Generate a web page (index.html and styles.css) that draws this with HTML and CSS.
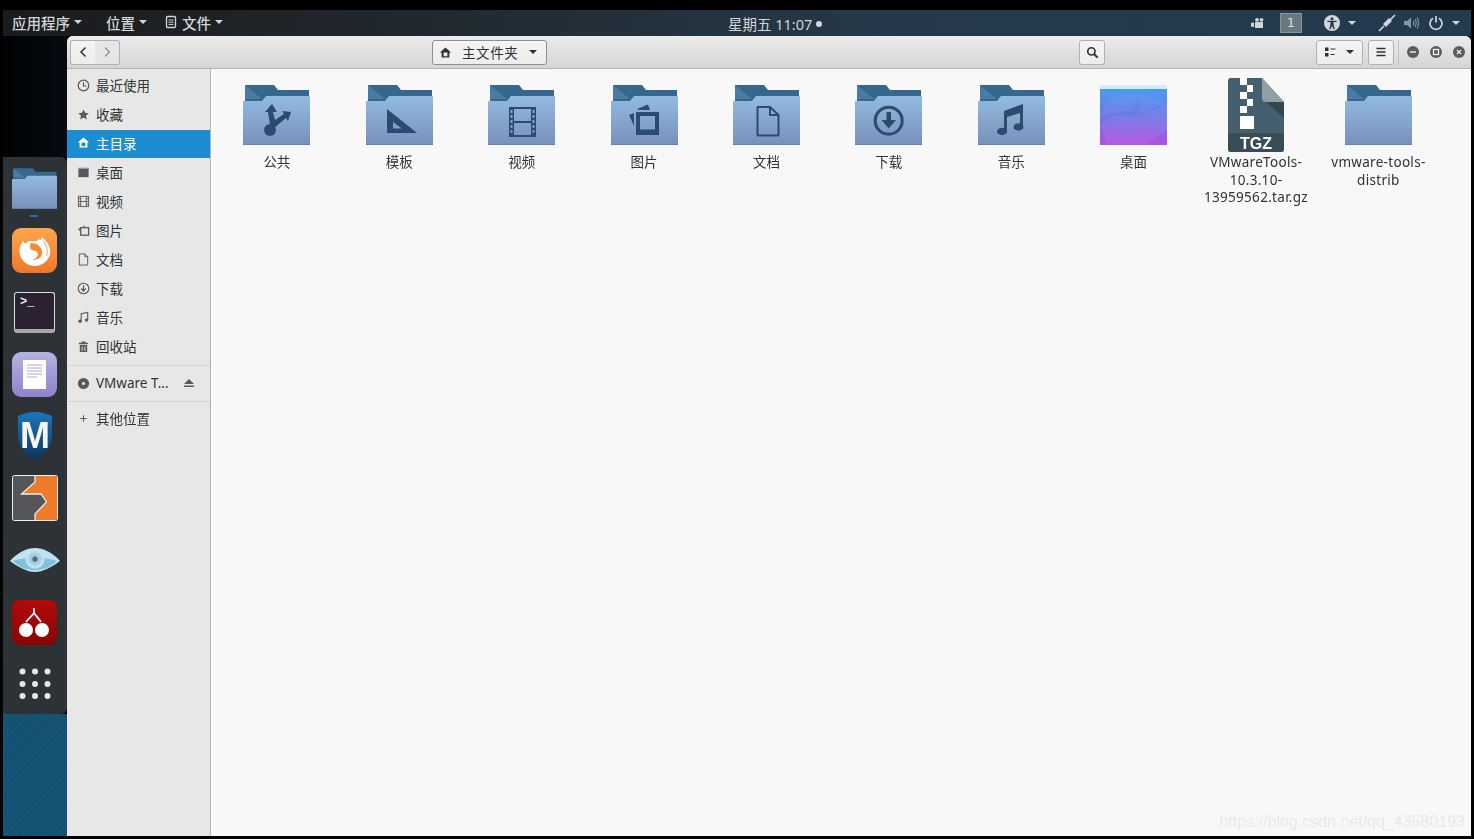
FILE: index.html
```html
<!DOCTYPE html>
<html>
<head>
    <title>主文件夹</title>
    <meta charset="utf-8">
    <link rel="stylesheet" href="styles.css">
</head>
<body>
<svg class="defs" width="0" height="0">
    <defs>
        <linearGradient id="folderFront" x1="0" y1="0" x2="0" y2="1">
            <stop offset="0" stop-color="#93bbe0"/>
            <stop offset="1" stop-color="#7890bb"/>
        </linearGradient>
        <linearGradient id="wall" x1="0" y1="0" x2="0" y2="1">
            <stop offset="0" stop-color="#45a0f2"/>
            <stop offset="0.5" stop-color="#6d79e6"/>
            <stop offset="1" stop-color="#b24fe2"/>
        </linearGradient>
        <linearGradient id="fox" x1="0" y1="0" x2="0" y2="1">
            <stop offset="0" stop-color="#ffa64f"/>
            <stop offset="1" stop-color="#f0772a"/>
        </linearGradient>
        <linearGradient id="editor" x1="0" y1="0" x2="0" y2="1">
            <stop offset="0" stop-color="#b6b2e2"/>
            <stop offset="1" stop-color="#8d83cb"/>
        </linearGradient>
        <linearGradient id="shield" x1="0" y1="0" x2="0" y2="1">
            <stop offset="0" stop-color="#1c76b8"/>
            <stop offset="1" stop-color="#10335c"/>
        </linearGradient>
        <linearGradient id="cherry" x1="0" y1="0" x2="0" y2="1">
            <stop offset="0" stop-color="#b50a0a"/>
            <stop offset="1" stop-color="#880404"/>
        </linearGradient>
        <radialGradient id="iris">
            <stop offset="0" stop-color="#5d8ba5"/>
            <stop offset="0.35" stop-color="#9cc6dc"/>
            <stop offset="1" stop-color="#cfe8f2"/>
        </radialGradient>

        <symbol id="folder" viewBox="0 0 67 60">
            <path d="M2 0H31L35 5H66V18H2Z" fill="#36678c"/>
            <path d="M2 0L19 14H2Z" fill="#4a7ba3"/>
            <path d="M0 16H19L23 11H67V60H0Z" fill="url(#folderFront)"/>
            <path d="M0 59H67V60H0Z" fill="#6683ad"/>
        </symbol>
    </defs>
</svg>

<div class="screen">
    <div class="panel">
        <div class="panel-left">
            <span class="panel-menu">应用程序<i class="caret"></i></span>
            <span class="panel-menu places">位置<i class="caret"></i></span>
            <span class="panel-menu files">
                <svg class="ico" viewBox="0 0 12 14" width="12" height="14"><rect x="1.5" y="1.5" width="9" height="11" rx="1" fill="none" stroke="currentColor" stroke-width="1.3"/><path d="M3.5 5H8.5M3.5 7.2H8.5M3.5 9.4H8.5" stroke="currentColor"/></svg>
                文件<i class="caret"></i>
            </span>
        </div>
        <div class="panel-clock">星期五 11:07<i class="dot"></i></div>
        <div class="panel-right">
            <svg class="cam" viewBox="0 0 14 12" width="14" height="12"><path d="M4 5H12V11H4ZM0 6L3 5.500V10L0 9.500Z" fill="currentColor"/><circle cx="6" cy="2.800" r="1.900" fill="currentColor"/><circle cx="10.500" cy="2.800" r="1.900" fill="currentColor"/></svg>
            <span class="workspace">1</span>
            <svg class="access" viewBox="0 0 16 16" width="16" height="16"><circle cx="8" cy="8" r="8" fill="currentColor"/><circle cx="8" cy="3.8" r="1.5" fill="#243a4a"/><path d="M3.5 5.8H12.5V7H9.6V10L10.8 14H9.4L8 10.8 6.6 14H5.2L6.4 10V7H3.5Z" fill="#243a4a"/></svg>
            <i class="caret"></i>
            <svg class="plug" viewBox="0 0 18 18" width="18" height="18"><path d="M1 17L6 12M12 6L17 1" stroke="currentColor" stroke-width="1.6"/><path d="M5 10L8 7 11 4 14 7 8 13Z" fill="currentColor"/></svg>
            <svg class="vol" viewBox="0 0 16 14" width="16" height="14"><path d="M1 5H4L8 1.5V12.5L4 9H1Z" fill="#8a959c"/><path d="M10 4.5Q11.5 7 10 9.5M12 3Q14.3 7 12 11M14 1.5Q17 7 14 12.5" fill="none" stroke="#8a959c" stroke-width="1.1"/></svg>
            <svg class="power" viewBox="0 0 16 16" width="16" height="16"><path d="M5 3.2A6 6 0 1 0 11 3.2" fill="none" stroke="currentColor" stroke-width="1.7"/><path d="M8 1V7.5" stroke="currentColor" stroke-width="1.7"/></svg>
            <i class="caret"></i>
        </div>
    </div>

    <div class="desktop">
        <div class="dock-col">
            <div class="dock-top"></div>
            <div class="dock">
                <div class="dock-item running">
                    <svg width="45" height="41"><use href="#folder"/></svg>
                    <i class="run-mark"></i>
                </div>
                <div class="dock-item">
                    <svg width="45" height="45" viewBox="0 0 45 45">
                        <rect width="45" height="45" rx="9" fill="url(#fox)"/>
                        <path d="M30 9C36 14 39 20 38 26 36.500 33 30 38 23 38 14 38 7.500 31 7.500 23 7.500 19 9 15.500 11.500 13L13 16C15 13.500 17.500 12.500 20 13 23 13.500 26 13 27 11 28 12.500 29.500 12 30 9Z" fill="#fff"/>
                        <path d="M19 15C26 15 31 20 30 26 29 30 25 32.500 20.500 31.500 24.500 30.500 27 27.500 25.500 24.500 24 22 20 23 18.500 21 17.500 19.500 18 17 19 15Z" fill="#f58a35"/>
                        <path d="M31.500 13C35 18 36 23 34.500 28" fill="none" stroke="#f58a35" stroke-width="0.800"/>
                    </svg>
                </div>
                <div class="dock-item">
                    <div class="term"><span class="term-prompt">&gt;_</span></div>
                </div>
                <div class="dock-item">
                    <svg width="45" height="45" viewBox="0 0 45 45">
                        <rect width="45" height="45" rx="9" fill="url(#editor)"/>
                        <rect x="11" y="8" width="23" height="29" fill="#fff"/>
                        <path d="M15 13H30M15 16H30M15 19H30M15 22H30M15 25H25" stroke="#a9a4d8" stroke-width="1"/>
                    </svg>
                </div>
                <div class="dock-item">
                    <svg width="36" height="48" viewBox="0 0 36 48">
                        <path d="M18 0C24 0 30 2 35 4V26C35 35 26 43 18 48 10 43 1 35 1 26V4C6 2 12 0 18 0Z" fill="url(#shield)"/>
                        <text class="shield-m" x="18" y="36" text-anchor="middle">M</text>
                    </svg>
                </div>
                <div class="dock-item">
                    <svg width="46" height="46" viewBox="0 0 46 46">
                        <rect x="0.500" y="0.500" width="45" height="45" rx="2" fill="#555658" stroke="#eee"/>
                        <path d="M23 1H45V45H23V39L34.500 27 29 19H9.500L23 7Z" fill="#ef7a2a"/>
                        <path d="M23 1V7L9.500 19H29L34.500 27 23 39V45" fill="none" stroke="#eee" stroke-width="1.300"/>
                    </svg>
                </div>
                <div class="dock-item">
                    <svg width="50" height="24" viewBox="0 0 50 24">
                        <path d="M0 13C8 4 17 0 25 0 33 0 42 4 50 13 42 19 33 24 25 24 17 24 8 19 0 13Z" fill="#bfe3f1"/>
                        <path d="M3 13C12 9 38 9 47 13 40 20 32 22 25 22 18 22 10 20 3 13Z" fill="#7fc0dc"/>
                        <circle cx="25" cy="11" r="9.500" fill="url(#iris)"/>
                        <circle cx="25" cy="11" r="2.500" fill="#4d6f84"/>
                    </svg>
                </div>
                <div class="dock-item">
                    <svg width="45" height="45" viewBox="0 0 45 45">
                        <rect width="45" height="45" rx="8" fill="url(#cherry)"/>
                        <path d="M22 8V13M22 13C20 16 17 18 14 22M22 13C25 17 27 19 29 22" fill="none" stroke="#fff" stroke-width="1.700"/>
                        <circle cx="14" cy="30" r="7" fill="#fff"/>
                        <circle cx="30" cy="30" r="7" fill="#fff"/>
                    </svg>
                </div>
                <div class="dock-item">
                    <svg width="32" height="32" viewBox="0 0 32 32" fill="#e6e6e6">
                        <circle cx="3.500" cy="3.500" r="3"/><circle cx="16" cy="3.500" r="3"/><circle cx="28.500" cy="3.500" r="3"/>
                        <circle cx="3.500" cy="16" r="3"/><circle cx="16" cy="16" r="3"/><circle cx="28.500" cy="16" r="3"/>
                        <circle cx="3.500" cy="28" r="3"/><circle cx="16" cy="28" r="3"/><circle cx="28.500" cy="28" r="3"/>
                    </svg>
                </div>
            </div>
            <div class="dock-bottom"></div>
        </div>

        <div class="window">
            <div class="toolbar">
                <div class="btn-group">
                    <button class="btn nav-btn"><svg viewBox="0 0 10 12" width="10" height="12"><path d="M7.500 1.500L3 6 7.500 10.500" fill="none" stroke="#2e3436" stroke-width="1.500"/></svg></button>
                    <button class="btn nav-btn off"><svg viewBox="0 0 10 12" width="10" height="12"><path d="M3 1.500L7.500 6 3 10.500" fill="none" stroke="#8a8f92" stroke-width="1.300"/></svg></button>
                </div>
                <button class="btn path-btn">
                    <svg viewBox="0 0 14 14" width="13" height="13"><use href="#i-home"/></svg>
                    <span class="path-label">主文件夹</span>
                    <i class="caret dark"></i>
                </button>
                <button class="btn search-btn">
                    <svg viewBox="0 0 14 14" width="13" height="13"><circle cx="5.800" cy="5.800" r="3.900" fill="none" stroke="#2e3436" stroke-width="1.800"/><path d="M8.600 8.600L12.500 12.500" stroke="#2e3436" stroke-width="2.200"/></svg>
                </button>
                <button class="btn view-btn">
                    <svg viewBox="0 0 12 10" width="12" height="10"><rect x="0" y="0.500" width="3.500" height="3.500" fill="#2e3436"/><rect x="0" y="6" width="3.500" height="3.500" fill="#2e3436"/><path d="M5.500 2H10.500M5.500 7.500H9.500" stroke="#2e3436" stroke-width="1.200"/></svg>
                    <i class="caret dark"></i>
                </button>
                <button class="btn menu-btn">
                    <svg viewBox="0 0 10 10" width="10" height="10"><path d="M0.500 1.500H9.500M0.500 5H9.500M0.500 8.500H9.500" stroke="#2e3436" stroke-width="1.500"/></svg>
                </button>
                <span class="tool-sep"></span>
                <span class="win-btn"><svg viewBox="0 0 12 12" width="12" height="12"><circle cx="6" cy="6" r="6" fill="#5b5e60"/><path d="M3 6H9" stroke="#eee" stroke-width="1.600"/></svg></span>
                <span class="win-btn"><svg viewBox="0 0 12 12" width="12" height="12"><circle cx="6" cy="6" r="6" fill="#5b5e60"/><rect x="3.500" y="3.500" width="5" height="5" fill="none" stroke="#eee" stroke-width="1.300"/></svg></span>
                <span class="win-btn"><svg viewBox="0 0 12 12" width="12" height="12"><circle cx="6" cy="6" r="6" fill="#5b5e60"/><path d="M4 4L8 8M8 4L4 8" stroke="#eee" stroke-width="1.300"/></svg></span>
            </div>

            <div class="main">
                <div class="sidebar">
                    <svg class="defs" width="0" height="0">
                        <symbol id="i-home" viewBox="0 0 14 14"><path d="M7 1.500L13 7H11.200V12.500H2.800V7H1ZM5 11H9V7H5Z" fill="currentColor" fill-rule="evenodd"/></symbol>
                    </svg>
                    <div class="side-row"><svg viewBox="0 0 14 14"><circle cx="7" cy="7" r="5.700" fill="none" stroke="currentColor" stroke-width="1.300"/><path d="M7 3.500V7.500H10" fill="none" stroke="currentColor" stroke-width="1.200"/></svg>最近使用</div>
                    <div class="side-row"><svg viewBox="0 0 14 14"><path d="M7 1.500L8.700 5.200 12.700 5.600 9.700 8.300 10.600 12.300 7 10.200 3.400 12.300 4.300 8.300 1.300 5.600 5.300 5.200Z" fill="currentColor"/></svg>收藏</div>
                    <div class="side-row selected"><svg viewBox="0 0 14 14"><use href="#i-home"/></svg>主目录</div>
                    <div class="side-row"><svg viewBox="0 0 14 14"><rect x="1.500" y="2" width="11" height="10" fill="currentColor"/><rect x="1.500" y="2" width="11" height="1" fill="#aaa"/></svg>桌面</div>
                    <div class="side-row"><svg viewBox="0 0 14 14"><rect x="1.500" y="1.500" width="11" height="11" fill="none" stroke="currentColor"/><path d="M4 1.500V12.500M10 1.500V12.500M4 7H10M1.500 4H4M1.500 7H4M1.500 10H4M10 4H12.500M10 7H12.500M10 10H12.500" stroke="currentColor"/></svg>视频</div>
                    <div class="side-row"><svg viewBox="0 0 14 14"><rect x="4" y="4" width="8.500" height="8" fill="none" stroke="currentColor" stroke-width="1.400"/><path d="M1 5L3 4.300V8ZM5 2.800L8.500 1.500 9.200 2.800Z" fill="currentColor"/></svg>图片</div>
                    <div class="side-row"><svg viewBox="0 0 14 14"><path d="M2.500 1H8.500L11.500 4V13H2.500ZM8.500 1V4H11.500" fill="none" stroke="currentColor"/></svg>文档</div>
                    <div class="side-row"><svg viewBox="0 0 14 14"><circle cx="7" cy="7" r="5.700" fill="none" stroke="currentColor" stroke-width="1.200"/><path d="M7 3.500V9M4.500 7L7 9.800 9.500 7" fill="none" stroke="currentColor" stroke-width="1.300"/></svg>下载</div>
                    <div class="side-row"><svg viewBox="0 0 14 14"><path d="M4.500 11V3L11.500 1.500V9.500" fill="none" stroke="currentColor" stroke-width="1.200"/><circle cx="3.300" cy="11" r="1.800" fill="currentColor"/><circle cx="10.200" cy="9.800" r="1.800" fill="currentColor"/></svg>音乐</div>
                    <div class="side-row"><svg viewBox="0 0 14 14"><path d="M2 3H12V4.500H2ZM5 1.500H9V3H5ZM3 5.500H11V13H3ZM5 7V11.500H6V7ZM8 7V11.500H9V7Z" fill="currentColor" fill-rule="evenodd"/></svg>回收站</div>
                    <div class="side-sep"></div>
                    <div class="side-row device"><svg viewBox="0 0 14 14"><circle cx="7" cy="7" r="6" fill="currentColor"/><circle cx="7" cy="7" r="1.700" fill="#e6e6e6"/></svg><span class="side-name">VMware T...</span><svg class="eject" viewBox="0 0 12 12"><path d="M6 2L11 7H1ZM1 8.500H11V10H1Z" fill="currentColor"/></svg></div>
                    <div class="side-sep"></div>
                    <div class="side-row"><svg viewBox="0 0 14 14"><path d="M7 3.500V10.500M3.500 7H10.500" stroke="currentColor" stroke-width="1.100"/></svg>其他位置</div>
                </div>

                <div class="files-view">
                    <div class="file">
                        <svg class="thumb" width="67" height="60" viewBox="0 0 67 60">
                            <use href="#folder" width="67" height="60"/>
                            <g class="glyph">
                                <circle cx="27" cy="45" r="6"/>
                                <path d="M27 40L25 27H22L29 19 34 27H30L32 35 41 29 39 26 48 27 45 36 43 33 31 43Z"/>
                            </g>
                        </svg>
                        <span class="file-name">公共</span>
                    </div>
                    <div class="file">
                        <svg class="thumb" width="67" height="60" viewBox="0 0 67 60">
                            <use href="#folder" width="67" height="60"/>
                            <path class="glyph" fill-rule="evenodd" d="M21 24L51 48H21ZM27 37V43.500H36Z"/>
                        </svg>
                        <span class="file-name">模板</span>
                    </div>
                    <div class="file">
                        <svg class="thumb" width="67" height="60" viewBox="0 0 67 60">
                            <use href="#folder" width="67" height="60"/>
                            <path class="glyph" fill-rule="evenodd" d="M21 22H48V52H21ZM26 24V36H43V24ZM26 38V50H43V38ZM22.500 25V28H24.500V25ZM22.500 30V33H24.500V30ZM22.500 35V38H24.500V35ZM22.500 40V43H24.500V40ZM22.500 45V48H24.500V45ZM44.500 25V28H46.500V25ZM44.500 30V33H46.500V30ZM44.500 35V38H46.500V35ZM44.500 40V43H46.500V40ZM44.500 45V48H46.500V45Z"/>
                        </svg>
                        <span class="file-name">视频</span>
                    </div>
                    <div class="file">
                        <svg class="thumb" width="67" height="60" viewBox="0 0 67 60">
                            <use href="#folder" width="67" height="60"/>
                            <path class="glyph" fill-rule="evenodd" d="M25 27H48V50H25ZM29 31V44.500H44V31ZM18 30L23 28V41ZM26 24L37 19.500 39 25H28Z"/>
                        </svg>
                        <span class="file-name">图片</span>
                    </div>
                    <div class="file">
                        <svg class="thumb" width="67" height="60" viewBox="0 0 67 60">
                            <use href="#folder" width="67" height="60"/>
                            <path d="M24.500 22H37L45.500 30V50.500H24.500ZM37 22V30H45.500" fill="none" stroke="#2a4d6e" stroke-width="2" stroke-linejoin="round"/>
                        </svg>
                        <span class="file-name">文档</span>
                    </div>
                    <div class="file">
                        <svg class="thumb" width="67" height="60" viewBox="0 0 67 60">
                            <use href="#folder" width="67" height="60"/>
                            <circle cx="33.700" cy="35.700" r="13.500" fill="none" stroke="#2a4d6e" stroke-width="3"/>
                            <path class="glyph" d="M31.500 27H36V35H41L33.700 43.500 26.500 35H31.500Z"/>
                        </svg>
                        <span class="file-name">下载</span>
                    </div>
                    <div class="file">
                        <svg class="thumb" width="67" height="60" viewBox="0 0 67 60">
                            <use href="#folder" width="67" height="60"/>
                            <path class="glyph" d="M26 26L45 19V42H42V28L29 32V47H26Z"/>
                            <ellipse class="glyph" cx="24" cy="46.500" rx="5" ry="3.700"/>
                            <ellipse class="glyph" cx="40.500" cy="42" rx="5" ry="3.700"/>
                        </svg>
                        <span class="file-name">音乐</span>
                    </div>
                    <div class="file">
                        <svg class="thumb" width="67" height="60" viewBox="0 0 67 60">
                            <rect width="67" height="60" fill="url(#wall)"/>
                            <path d="M0 40L14 30 34 32 44 60H8ZM34 32L67 20V45L44 60Z" fill="#fff" fill-opacity="0.06"/>
                            <path d="M10 12L40 8 30 26 0 30ZM40 8L67 18 40 28Z" fill="#fff" fill-opacity="0.05"/>
                            <rect width="67" height="4" fill="#d6ecfb"/>
                        </svg>
                        <span class="file-name">桌面</span>
                    </div>
                    <div class="file tgz">
                        <svg class="thumb" width="56" height="74" viewBox="0 0 56 74">
                            <path d="M3 0H34L56 24V71Q56 74 53 74H3Q0 74 0 71V3Q0 0 3 0Z" fill="#465f6e"/>
                            <path d="M34 0L56 24H38Q34 24 34 20Z" fill="#8e9fa6"/>
                            <path d="M38 24H56V40Z" fill="#33454f"/>
                            <path d="M0 55H56V71Q56 74 53 74H3Q0 74 0 71Z" fill="#394d59"/>
                            <path d="M12 0H19V7H25V14H19V7H12ZM12 14H19V21H25V28H19V21H12ZM12 28H19V35H12ZM12 38H26V51H12Z" fill="#fff"/>
                            <text class="tgz-label" x="28" y="70.500" text-anchor="middle">TGZ</text>
                        </svg>
                        <span class="file-name latin">VMwareTools-10.3.10-13959562.tar.gz</span>
                    </div>
                    <div class="file">
                        <svg class="thumb" width="67" height="60" viewBox="0 0 67 60">
                            <use href="#folder" width="67" height="60"/>
                        </svg>
                        <span class="file-name latin">vmware-tools-distrib</span>
                    </div>
                </div>
            </div>
            <div class="watermark">https://blog.csdn.net/qq_43580193</div>
        </div>
    </div>
</div>
</body>
</html>
```
FILE: styles.css
```css
html, body {
    margin: 0;
    padding: 0;
    height: 100%;
    overflow: hidden;
}
body {
    background-color: #000;
    font-family: "Noto Sans", "Noto Sans CJK SC", sans-serif;
    font-size: 13.5px;
    color: #2e3436;
}
.defs {
    position: absolute;
}
.screen {
    height: 839px;
    box-sizing: border-box;
    padding: 10px 3px 3px;
    display: flex;
    flex-direction: column;
    filter: blur(0.35px);
}

/* top bar */
.panel {
    height: 26px;
    flex: none;
    display: flex;
    align-items: center;
    position: relative;
    color: #d3d5d6;
    background: linear-gradient(90deg, #1a1b1e 0%, #20272c 25%, #25394a 60%, #233b4f 100%);
}
.panel-left {
    display: flex;
    align-items: center;
    padding-left: 9px;
    padding-bottom: 2px;
}
.panel-menu {
    display: flex;
    align-items: center;
    font-size: 14.5px;
    font-weight: 500;
}
.places {
    margin-left: 24px;
}
.files {
    margin-left: 18px;
}
.files .ico {
    margin-right: 5px;
}
.caret {
    display: inline-block;
    width: 0;
    height: 0;
    margin-left: 4px;
    border-left: 4px solid transparent;
    border-right: 4px solid transparent;
    border-top: 4px solid currentColor;
}
.caret.dark {
    color: #2e3436;
}
.panel-clock {
    position: absolute;
    left: 725px;
    top: 3px;
    display: flex;
    align-items: center;
    font-size: 14.5px;
    white-space: nowrap;
}
.dot {
    width: 6px;
    height: 6px;
    margin-left: 4px;
    border-radius: 50%;
    background-color: #d3d5d6;
}
.panel-right {
    margin-left: auto;
    display: flex;
    align-items: center;
    padding-right: 11px;
}
.workspace {
    width: 22px;
    height: 20px;
    margin-left: 15px;
    box-sizing: border-box;
    border: 1px solid #8b959b;
    background-color: #687883;
    color: #d6dadc;
    font-family: "DejaVu Sans", sans-serif;
    font-size: 13px;
    line-height: 18px;
    text-align: center;
}
.access {
    margin-left: 22px;
}
.access + .caret {
    margin-left: 8px;
}
.plug {
    margin-left: 22px;
}
.vol {
    margin-left: 7px;
}
.power {
    margin-left: 9px;
}
.power + .caret {
    margin-left: 8px;
}

/* desktop */
.desktop {
    flex: 1;
    min-height: 0;
    display: flex;
}
.dock-col {
    width: 64px;
    flex: none;
    display: flex;
    flex-direction: column;
}
.dock-top {
    height: 121px;
    background: linear-gradient(90deg, #010203, #050b10);
}
.dock {
    height: 557px;
    flex: none;
    background-color: #2d3236;
    border-radius: 0 6px 6px 0;
}
.dock-item {
    width: 63px;
    height: 62px;
    display: flex;
    align-items: center;
    justify-content: center;
    position: relative;
}
.run-mark {
    position: absolute;
    left: 27px;
    bottom: 2px;
    width: 8px;
    height: 2px;
    background-color: #2a6fb0;
}
.term {
    width: 41px;
    height: 41px;
    box-sizing: border-box;
    border: 1px solid #ddd;
    border-bottom: 4px solid #a8a8a8;
    border-radius: 3px;
    background-color: #2a2233;
    padding: 2px 5px;
}
.term-prompt {
    font-family: "Liberation Mono", monospace;
    font-weight: bold;
    font-size: 12px;
    line-height: 14px;
    color: #eee;
    display: block;
}
.shield-m {
    font-family: "Liberation Sans", sans-serif;
    font-weight: bold;
    font-size: 36px;
    fill: #f2f4f6;
}
.dock-bottom {
    flex: 1;
    background: repeating-linear-gradient(135deg, #13506f 0, #13506f 2px, #165576 2px, #165576 4px);
}

/* window */
.window {
    flex: 1;
    min-width: 0;
    display: flex;
    flex-direction: column;
    position: relative;
    background-color: #f8f8f8;
    border-radius: 6px 6px 0 0;
    overflow: hidden;
}
.toolbar {
    height: 32px;
    flex: none;
    box-sizing: content-box;
    display: flex;
    align-items: center;
    padding-left: 3px;
    background: linear-gradient(180deg, #ececec, #d5d5d5);
    border-bottom: 1px solid #b4b4b4;
}
.btn {
    height: 25px;
    box-sizing: border-box;
    padding: 0;
    display: flex;
    align-items: center;
    justify-content: center;
    font-family: inherit;
    font-size: 13.5px;
    color: #2e3436;
    background: linear-gradient(180deg, #f4f4f4, #ededed);
    border: 1px solid #b0b0b0;
    border-radius: 3px;
}
.btn-group {
    display: flex;
}
.nav-btn {
    width: 25px;
}
.nav-btn:first-child {
    border-right: none;
    border-radius: 3px 0 0 3px;
}
.nav-btn.off {
    border-left: none;
    border-radius: 0 3px 3px 0;
    background: #e6e6e6;
}
.path-btn {
    width: 115px;
    margin-left: 312px;
    border-color: #8f8f8f;
    padding: 0 9px 0 6px;
}
.path-label {
    margin: 0 auto 0 10px;
    letter-spacing: 0.6px;
}
.search-btn {
    width: 26px;
    margin-left: auto;
}
.view-btn {
    width: 47px;
    margin-left: 211px;
    padding: 0 8px 0 8px;
    justify-content: space-between;
}
.menu-btn {
    width: 26px;
    margin-left: 5px;
}
.tool-sep {
    width: 1px;
    height: 24px;
    margin: 0 2px 0 4px;
    background-color: #c6c6c6;
}
.win-btn {
    width: 23px;
    height: 12px;
    display: flex;
    justify-content: center;
}
.win-btn svg {
    display: block;
}
.win-btn:last-child {
    margin-right: 1px;
}
.main {
    flex: 1;
    min-height: 0;
    display: flex;
}

/* sidebar */
.sidebar {
    width: 143px;
    flex: none;
    box-sizing: content-box;
    padding-top: 3px;
    background-color: #e7e7e7;
    border-right: 1px solid #b4b4b4;
}
.side-row {
    height: 29px;
    box-sizing: border-box;
    display: flex;
    align-items: center;
    padding: 0 0 3px 10px;
    color: #2e3436;
    white-space: nowrap;
}
.side-row > svg:first-child {
    width: 13px;
    height: 13px;
    margin-right: 6px;
    flex: none;
    color: #55595c;
}
.side-row.selected {
    height: 28px;
    margin-bottom: 1px;
    color: #fff;
    background-color: #1b8dd0;
}
.side-row.selected > svg:first-child {
    color: #fff;
}
.side-sep {
    height: 1px;
    margin: 3px 0;
    background-color: #d4d4d4;
}
.side-row.device {
    height: 29px;
    padding-bottom: 1px;
}
.side-name {
    flex: 1;
}
.eject {
    width: 12px;
    height: 12px;
    margin-right: 15px;
    color: #55595c;
}

/* icon grid */
.files-view {
    flex: 1;
    min-width: 0;
    display: grid;
    grid-template-columns: repeat(10, 122.4px);
    align-content: start;
    padding: 16px 0 0 4.7px;
}
.file {
    display: flex;
    flex-direction: column;
    align-items: center;
    text-align: center;
}
.thumb {
    height: 60px;
    margin-bottom: 9px;
    display: block;
}
.tgz {
    margin-top: -7px;
}
.tgz .thumb {
    height: 74px;
    margin-bottom: 2px;
}
.glyph {
    fill: #2a4d6e;
}
.tgz-label {
    font-family: "Liberation Sans", sans-serif;
    font-weight: 700;
    font-size: 16px;
    fill: #fff;
}
.file-name {
    width: 112px;
    line-height: 17.5px;
    overflow-wrap: anywhere;
    color: #2e3436;
}
.latin {
    letter-spacing: 0.3px;
}
.watermark {
    position: absolute;
    right: 6px;
    bottom: 5px;
    font-family: "Liberation Sans", sans-serif;
    font-size: 16px;
    color: #e8e8e8;
}
```
